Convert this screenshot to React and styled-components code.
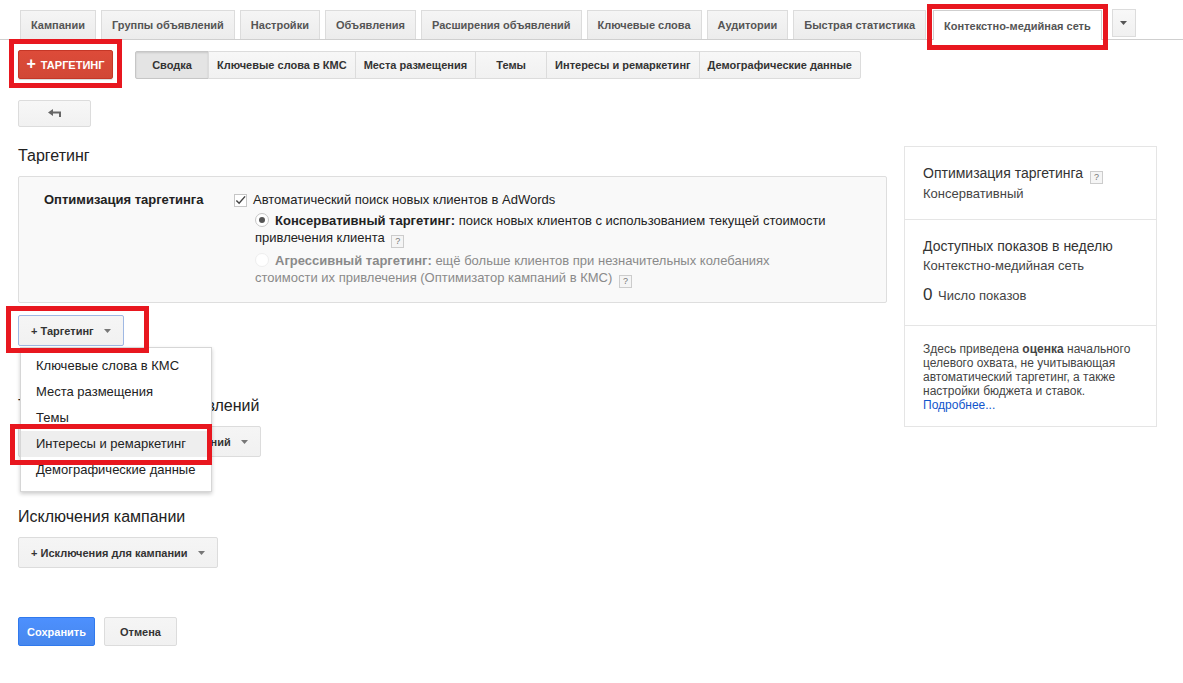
import React from 'react'
import styled, { createGlobalStyle } from 'styled-components'

const GlobalStyle = createGlobalStyle`
  body {
    margin: 0;
    background: #fff;
    color: #222;
    font-family: "Liberation Sans", Arial, sans-serif;
    font-size: 13px;
  }
`

const tabs = [
  'Кампании',
  'Группы объявлений',
  'Настройки',
  'Объявления',
  'Расширения объявлений',
  'Ключевые слова',
  'Аудитории',
  'Быстрая статистика',
]

const subTabs = [
  'Сводка',
  'Ключевые слова в КМС',
  'Места размещения',
  'Темы',
  'Интересы и ремаркетинг',
  'Демографические данные',
]

const menuItems = [
  'Ключевые слова в КМС',
  'Места размещения',
  'Темы',
  'Интересы и ремаркетинг',
  'Демографические данные',
]

function Arrow({ color = '#777' }) {
  return (
    <svg width="7" height="4" viewBox="0 0 7 4">
      <path d="M0 0 H7 L3.5 4 Z" fill={color} />
    </svg>
  )
}

function App() {
  return (
    <Page>
      <GlobalStyle />
      <TabBar>
        {tabs.map(t => <Tab key={t}>{t}</Tab>)}
        <Tab $active>
          Контекстно-медийная сеть
          <Mark $t={-7} $l={-7} $r={-7} $b={-10} />
        </Tab>
        <MoreTab><Arrow color="#555" /></MoreTab>
      </TabBar>

      <Content>
        <ActionRow>
          <RedButton>
            <Plus>+</Plus> ТАРГЕТИНГ
            <Mark $t={-12} $l={-10} $r={-10} $b={-10} />
          </RedButton>
          <Segmented>
            {subTabs.map((t, i) => <SegButton key={t} $active={i === 0}>{t}</SegButton>)}
          </Segmented>
        </ActionRow>

        <BackButton>
          <svg width="14" height="9" viewBox="0 0 14 9">
            <path d="M0 3.5 L5 0 V2.5 H13 V8 H11 V4.5 H5 V7 Z" fill="#666" />
          </svg>
        </BackButton>

        <Columns>
          <Main>
            <Heading>Таргетинг</Heading>
            <Panel>
              <Label>Оптимизация таргетинга</Label>
              <Options>
                <CheckRow>
                  <Checkbox>
                    <svg width="12" height="11" viewBox="0 0 12 11">
                      <path d="M1.5 5.5 L4.5 8.5 L11 1" stroke="#444" strokeWidth="1.6" fill="none" />
                    </svg>
                  </Checkbox>
                  Автоматический поиск новых клиентов в AdWords
                </CheckRow>
                <RadioOption>
                  <Radio $checked />
                  <b>Консервативный таргетинг:</b> поиск новых клиентов с использованием текущей стоимости<br />
                  привлечения клиента <Help>?</Help>
                </RadioOption>
                <RadioOption $disabled>
                  <Radio />
                  <b>Агрессивный таргетинг:</b> ещё больше клиентов при незначительных колебаниях<br />
                  стоимости их привлечения (Оптимизатор кампаний в КМС) <Help>?</Help>
                </RadioOption>
              </Options>
            </Panel>

            <DropWrap>
              <DropButton $open>
                + Таргетинг <Arrow />
                <Mark $t={-10} $l={-13} $r={-26} $b={-8} />
              </DropButton>
              <Menu>
                {menuItems.map((m, i) => (
                  <MenuItem key={m} $hover={i === 3}>
                    {m}
                    {i === 3 && <Mark $t={-7} $l={-11} $r={-5} $b={-8} />}
                  </MenuItem>
                ))}
              </Menu>
            </DropWrap>

            <Section>
              <Heading>Таргетинг для групп объявлений</Heading>
              <DropButton>+ Таргетинг для группы объявлений <Arrow /></DropButton>
            </Section>

            <Section>
              <Heading>Исключения кампании</Heading>
              <DropButton>+ Исключения для кампании <Arrow /></DropButton>
            </Section>

            <Footer>
              <SaveButton>Сохранить</SaveButton>
              <CancelButton>Отмена</CancelButton>
            </Footer>
          </Main>

          <Side>
            <SideBlock>
              <SideTitle>Оптимизация таргетинга <Help>?</Help></SideTitle>
              <SideText>Консервативный</SideText>
            </SideBlock>
            <SideBlock>
              <SideTitle>Доступных показов в неделю</SideTitle>
              <SideText>Контекстно-медийная сеть</SideText>
              <Count><Big>0</Big> Число показов</Count>
            </SideBlock>
            <SideBlock $note>
              Здесь приведена <b>оценка</b> начального<br />
              целевого охвата, не учитывающая<br />
              автоматический таргетинг, а также<br />
              настройки бюджета и ставок.<br />
              <Link>Подробнее...</Link>
            </SideBlock>
          </Side>
        </Columns>
      </Content>
    </Page>
  )
}

const Page = styled.div`
  width: 1183px;
  min-height: 683px;
`

const Mark = styled.span`
  position: absolute;
  top: ${p => p.$t}px;
  left: ${p => p.$l}px;
  right: ${p => p.$r}px;
  bottom: ${p => p.$b}px;
  border: 5px solid #e8171f;
  pointer-events: none;
  z-index: 10;
`

const TabBar = styled.div`
  display: flex;
  align-items: flex-end;
  height: 39px;
  padding-left: 20px;
  border-bottom: 1px solid #cfcfcf;
`

const Tab = styled.div`
  position: relative;
  display: flex;
  align-items: center;
  height: ${p => (p.$active ? 29 : 28)}px;
  margin: ${p => (p.$active ? '0 10px -1px 2px' : '0 5px 0 0')};
  padding: 0 10px;
  border: 1px solid ${p => (p.$active ? '#cfcfcf' : '#dcdcdc')};
  border-bottom: none;
  background: ${p => (p.$active ? '#fff' : 'linear-gradient(#f5f5f5, #ececec)')};
  color: #555;
  font-size: 11px;
  font-weight: bold;
  white-space: nowrap;
`

const MoreTab = styled.div`
  display: flex;
  align-items: center;
  justify-content: center;
  width: 22px;
  height: 26px;
  margin-bottom: 2px;
  border: 1px solid #dcdcdc;
  background: linear-gradient(#f8f8f8, #f0f0f0);
`

const Content = styled.div`
  padding: 0 18px;
`

const ActionRow = styled.div`
  display: flex;
  align-items: center;
  gap: 22px;
  margin-top: 10px;
`

const RedButton = styled.div`
  position: relative;
  display: flex;
  align-items: center;
  justify-content: center;
  gap: 5px;
  width: 93px;
  height: 27px;
  border: 1px solid #c53727;
  border-radius: 2px;
  background: linear-gradient(#dd4b39, #d14836);
  color: #fff;
  font-size: 11px;
  font-weight: bold;
  box-shadow: 0 1px 1px rgba(0, 0, 0, 0.15);
`

const Plus = styled.span`
  font-size: 16px;
  line-height: 1;
  margin-top: -2px;
`

const Segmented = styled.div`
  display: flex;
  height: 28px;
`

const SegButton = styled.div`
  display: flex;
  align-items: center;
  justify-content: center;
  min-width: 54px;
  padding: 0 8px;
  border: 1px solid ${p => (p.$active ? '#c6c6c6' : '#dcdcdc')};
  margin-left: -1px;
  background: ${p => (p.$active ? '#e4e4e4' : 'linear-gradient(#f7f7f7, #f1f1f1)')};
  box-shadow: ${p => (p.$active ? 'inset 0 1px 2px rgba(0,0,0,0.12)' : 'none')};
  color: #333;
  font-size: 11px;
  font-weight: bold;
  white-space: nowrap;
  &:first-child {
    margin-left: 0;
    min-width: 56px;
    border-radius: 2px 0 0 2px;
  }
  &:last-child {
    border-radius: 0 2px 2px 0;
  }
`

const BackButton = styled.div`
  display: flex;
  align-items: center;
  justify-content: center;
  width: 71px;
  height: 25px;
  margin-top: 21px;
  border: 1px solid #dcdcdc;
  border-radius: 2px;
  background: linear-gradient(#f7f7f7, #f1f1f1);
`

const Columns = styled.div`
  display: grid;
  grid-template-columns: 869px 253px;
  gap: 17px;
  margin-top: 19px;
  align-items: start;
`

const Main = styled.div`
  display: flex;
  flex-direction: column;
  align-items: flex-start;
`

const Heading = styled.h2`
  margin: 0 0 10px;
  font-size: 16px;
  font-weight: normal;
  line-height: 20px;
  color: #222;
`

const Panel = styled.div`
  box-sizing: border-box;
  display: grid;
  grid-template-columns: 190px 1fr;
  width: 869px;
  height: 127px;
  padding: 14px 25px 0;
  border: 1px solid #dedede;
  border-radius: 2px;
  background: #f9f9f9;
`

const Label = styled.div`
  font-weight: bold;
  line-height: 18px;
  color: #222;
`

const Options = styled.div`
  display: flex;
  flex-direction: column;
`

const CheckRow = styled.div`
  display: flex;
  align-items: center;
  gap: 6px;
  line-height: 18px;
`

const Checkbox = styled.span`
  box-sizing: border-box;
  display: flex;
  align-items: center;
  justify-content: center;
  width: 13px;
  height: 13px;
  border: 1px solid #c6c6c6;
  background: #fff;
`

const RadioOption = styled.div`
  margin: ${p => (p.$disabled ? '3px' : '2px')} 0 0 21px;
  line-height: 17px;
  color: ${p => (p.$disabled ? '#8a8a8a' : '#222')};
`

const Radio = styled.span`
  box-sizing: border-box;
  display: inline-block;
  position: relative;
  top: 2px;
  width: 14px;
  height: 14px;
  margin-right: 6px;
  border: 1px solid ${p => (p.$checked ? '#c6c6c6' : '#eee')};
  border-radius: 50%;
  background: #fff;
  &::after {
    content: '';
    display: ${p => (p.$checked ? 'block' : 'none')};
    position: absolute;
    top: 3px;
    left: 3px;
    width: 6px;
    height: 6px;
    border-radius: 50%;
    background: #555;
  }
`

const Help = styled.span`
  box-sizing: border-box;
  display: inline-flex;
  align-items: center;
  justify-content: center;
  width: 13px;
  height: 13px;
  margin-left: 3px;
  vertical-align: -2px;
  border: 1px solid #ccc;
  background: #f5f5f5;
  color: #777;
  font-size: 9px;
  font-weight: normal;
`

const DropWrap = styled.div`
  position: relative;
  margin-top: 12px;
`

const DropButton = styled.div`
  position: relative;
  box-sizing: border-box;
  display: inline-flex;
  align-items: center;
  gap: 10px;
  height: 31px;
  padding: 0 12px;
  border: 1px solid ${p => (p.$open ? '#9fb8e3' : '#dcdcdc')};
  border-radius: 2px;
  background: linear-gradient(#f5f5f5, #f1f1f1);
  color: #333;
  font-size: 11px;
  font-weight: bold;
  white-space: nowrap;
`

const Menu = styled.div`
  position: absolute;
  top: 32px;
  left: 2px;
  z-index: 5;
  box-sizing: border-box;
  width: 192px;
  padding: 5px 0 8px;
  border: 1px solid #d6d6d6;
  background: #fff;
  box-shadow: 0 2px 4px rgba(0, 0, 0, 0.2);
`

const MenuItem = styled.div`
  position: relative;
  height: 26px;
  padding-left: 15px;
  line-height: 26px;
  font-size: 13px;
  color: #222;
  background: ${p => (p.$hover ? '#eee' : 'transparent')};
  margin-right: ${p => (p.$hover ? 4 : 0)}px;
`

const Section = styled.div`
  margin-top: 50px;
`

const Footer = styled.div`
  display: flex;
  gap: 9px;
  margin-top: 49px;
`

const SaveButton = styled.div`
  display: flex;
  align-items: center;
  justify-content: center;
  width: 75px;
  height: 27px;
  border: 1px solid #3079ed;
  border-radius: 2px;
  background: linear-gradient(#4d90fe, #4787ed);
  color: #fff;
  font-size: 11px;
  font-weight: bold;
`

const CancelButton = styled(SaveButton)`
  width: 71px;
  border-color: #dcdcdc;
  background: linear-gradient(#f5f5f5, #f1f1f1);
  color: #333;
`

const Side = styled.div`
  border: 1px solid #e5e5e5;
  color: #444;
`

const SideBlock = styled.div`
  padding: ${p => (p.$note ? '16px 18px 14px' : '16px 18px 15px')};
  font-size: ${p => (p.$note ? 12 : 13)}px;
  line-height: ${p => (p.$note ? 14 : 20)}px;
  &:nth-child(2) {
    padding: 16px 18px 19px;
  }
  & + & {
    border-top: 1px solid #e5e5e5;
  }
`

const SideTitle = styled.div`
  font-size: 14px;
  color: #333;
`

const SideText = styled.div`
  color: #444;
`

const Count = styled.div`
  margin-top: 9px;
`

const Big = styled.span`
  font-size: 17px;
  color: #333;
  margin-right: 2px;
`

const Link = styled.span`
  color: #1155cc;
`

export default App
